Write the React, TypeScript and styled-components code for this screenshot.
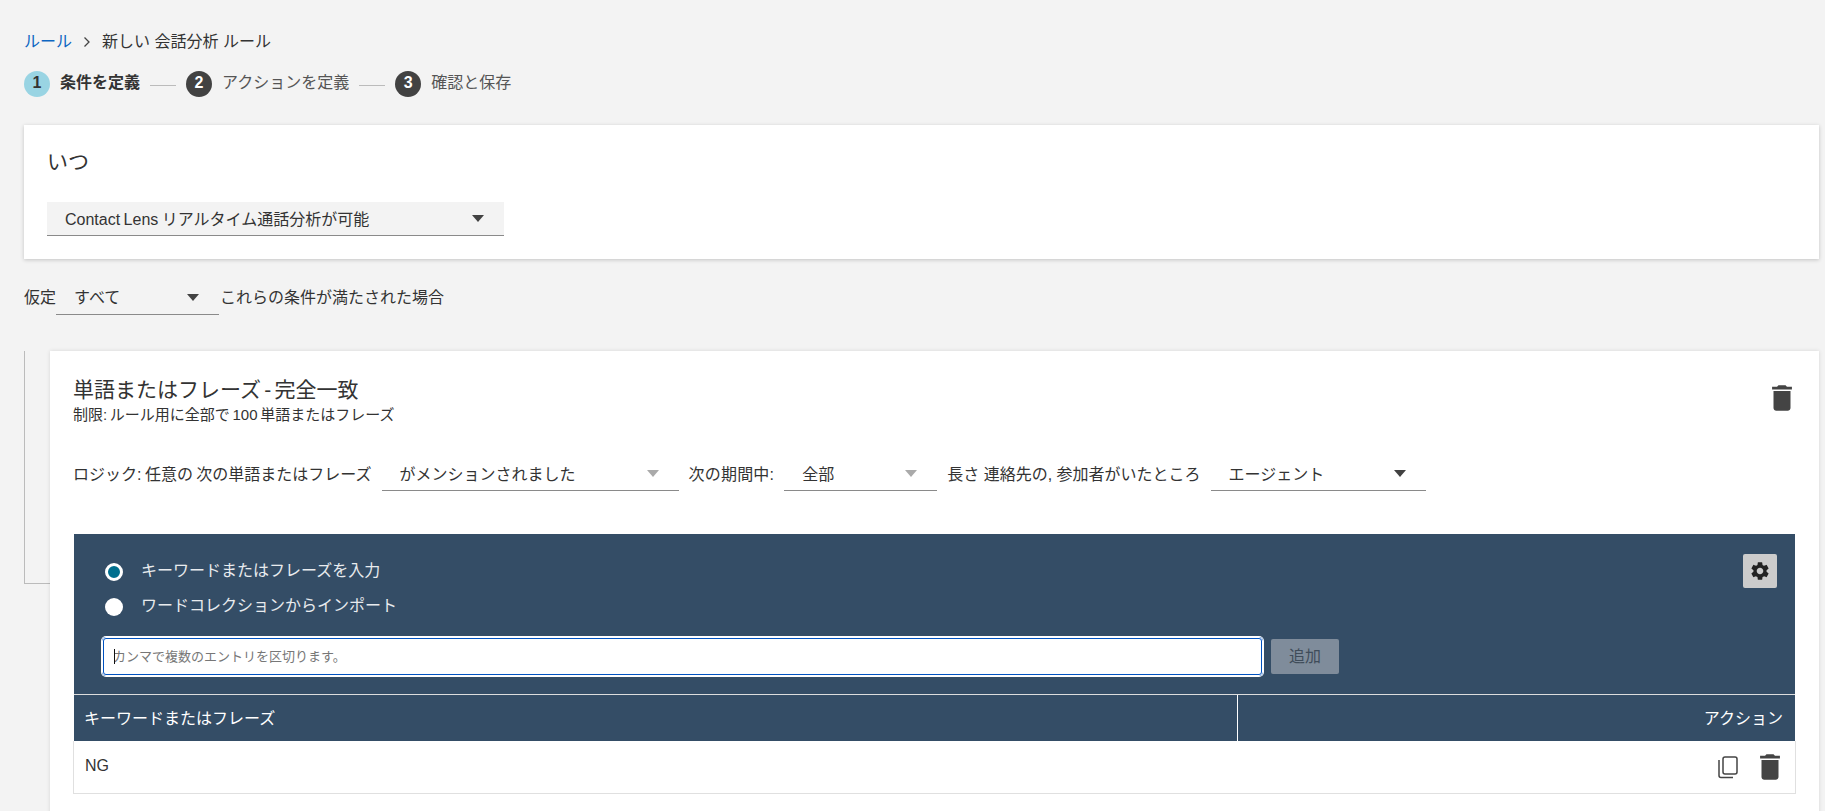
import { createGlobalStyle } from "styled-components";
import styled from "styled-components";
import { MdDelete, MdSettings } from "react-icons/md";

const GlobalStyle = createGlobalStyle`
  html, body {
    margin: 0;
    height: 100%;
    overflow: hidden;
    background: #f3f3f3;
  }

  body {
    font-family: "Liberation Sans", "Noto Sans CJK JP", sans-serif;
    font-size: 16px;
    color: #333;
  }
`;

function CopyIcon() {
  return (
    <svg width="20" height="23" viewBox="0 0 20 23" fill="none" stroke="#444" strokeWidth="1.5">
      <rect x="5" y="1" width="14" height="17" rx="2" />
      <path d="M1 4v15.5a2 2 0 0 0 2 2h12" />
    </svg>
  );
}

function App() {
  return (
    <Page>
      <GlobalStyle />
      <Breadcrumb>
        <CrumbLink>ルール</CrumbLink>
        <svg width="8" height="12" viewBox="0 0 8 12">
          <polyline points="1.5,1.5 6,6 1.5,10.5" fill="none" stroke="#444" strokeWidth="1.3" />
        </svg>
        <span>新しい 会話分析 ルール</span>
      </Breadcrumb>

      <Steps>
        <StepBadge $active>1</StepBadge>
        <StepLabel $active>条件を定義</StepLabel>
        <StepLine />
        <StepBadge>2</StepBadge>
        <StepLabel>アクションを定義</StepLabel>
        <StepLine />
        <StepBadge>3</StepBadge>
        <StepLabel>確認と保存</StepLabel>
      </Steps>

      <WhenCard>
        <WhenTitle>いつ</WhenTitle>
        <Select $filled $width={457}>
          <SelectText>Contact Lens リアルタイム通話分析が可能</SelectText>
          <Arrow />
        </Select>
      </WhenCard>

      <AssumeRow>
        <InlineText>仮定</InlineText>
        <Select $width={163}>
          <SelectText>すべて</SelectText>
          <Arrow />
        </Select>
        <AssumeTail>これらの条件が満たされた場合</AssumeTail>
      </AssumeRow>

      <ConditionGroup>
        <Bracket />
        <ConditionCard>
          <ConditionHead>
            <div>
              <ConditionTitle>単語またはフレーズ - 完全一致</ConditionTitle>
              <ConditionLimit>制限: ルール用に全部で 100 単語またはフレーズ</ConditionLimit>
            </div>
            <HeadTrash>
              <MdDelete size={34} />
            </HeadTrash>
          </ConditionHead>

          <LogicRow>
            <LogicLead>ロジック: 任意の 次の単語またはフレーズ</LogicLead>
            <Select $width={297}>
              <SelectText>がメンションされました</SelectText>
              <Arrow $muted />
            </Select>
            <PeriodText>次の期間中:</PeriodText>
            <Select $width={153}>
              <SelectText>全部</SelectText>
              <Arrow $muted />
            </Select>
            <InlineText>長さ 連絡先の, 参加者がいたところ</InlineText>
            <Select $width={215}>
              <SelectText>エージェント</SelectText>
              <Arrow />
            </Select>
          </LogicRow>

          <Panel>
            <PanelTop>
              <div>
                <RadioRow>
                  <Radio $checked />
                  <RadioText>キーワードまたはフレーズを入力</RadioText>
                </RadioRow>
                <RadioRow>
                  <Radio />
                  <RadioText>ワードコレクションからインポート</RadioText>
                </RadioRow>
              </div>
              <GearButton>
                <MdSettings size={22} />
              </GearButton>
            </PanelTop>
            <InputRow>
              <InputWrap>
                <KeywordInput placeholder="カンマで複数のエントリを区切ります。" />
                <Caret />
              </InputWrap>
              <AddButton>追加</AddButton>
            </InputRow>
          </Panel>

          <TableHead>
            <HeadCell>キーワードまたはフレーズ</HeadCell>
            <HeadCell $right>アクション</HeadCell>
          </TableHead>
          <TableRow>
            <InlineText>NG</InlineText>
            <RowActions>
              <CopyIcon />
              <MdDelete size={34} />
            </RowActions>
          </TableRow>
        </ConditionCard>
      </ConditionGroup>
    </Page>
  );
}

export default App;

const Page = styled.div`
  height: 100vh;
  padding: 32px 6px 0 24px;
  box-sizing: border-box;
  overflow: hidden;
`;

const Breadcrumb = styled.div`
  display: flex;
  align-items: center;
  gap: 11px;
  font-size: 16px;
  line-height: 20px;
`;

const CrumbLink = styled.a`
  color: #0d66c2;
`;

const Steps = styled.div`
  display: flex;
  align-items: center;
  margin-top: 19px;
  height: 26px;
`;

const StepBadge = styled.div<{ $active?: boolean }>`
  width: 26px;
  height: 26px;
  padding-bottom: 3px;
  box-sizing: border-box;
  border-radius: 50%;
  display: flex;
  align-items: center;
  justify-content: center;
  font-size: 16px;
  font-weight: 700;
  background: ${(p) => (p.$active ? "#99d4e3" : "#424242")};
  color: ${(p) => (p.$active ? "#333" : "#fff")};
`;

const StepLabel = styled.div<{ $active?: boolean }>`
  margin: 0 0 7px 10px;
  font-weight: ${(p) => (p.$active ? 700 : 400)};
  color: ${(p) => (p.$active ? "#333" : "#555")};
`;

const StepLine = styled.div`
  width: 26px;
  height: 1px;
  background: #bbb;
  margin: 2px 10px 0;
`;

const WhenCard = styled.section`
  margin-top: 28px;
  height: 134px;
  box-sizing: border-box;
  padding: 23px 23px 0;
  background: #fff;
  box-shadow: 0 1px 4px rgba(0, 0, 0, 0.2);
`;

const WhenTitle = styled.h2`
  margin: 0 0 26px;
  font-size: 21px;
  line-height: 28px;
  font-weight: 400;
`;

const Select = styled.div<{ $width: number; $filled?: boolean }>`
  display: flex;
  flex: none;
  align-items: center;
  justify-content: space-between;
  box-sizing: border-box;
  width: ${(p) => p.$width}px;
  height: 34px;
  padding: 0 20px 0 18px;
  background: ${(p) => (p.$filled ? "#f3f3f3" : "transparent")};
  border-bottom: 1px solid #8a8a8a;
`;

const SelectText = styled.span`
  margin-bottom: 2px;
  word-spacing: -1px;
`;

const InlineText = styled.span`
  margin-bottom: 3px;
`;

const LogicLead = styled(InlineText)`
  word-spacing: -1px;
`;

const PeriodText = styled(InlineText)`
  letter-spacing: 0.2px;
`;

const AssumeTail = styled(InlineText)`
  margin-left: 1px;
`;

const Arrow = styled.i<{ $muted?: boolean }>`
  width: 0;
  height: 0;
  border-left: 6.5px solid transparent;
  border-right: 6.5px solid transparent;
  border-top: 7px solid ${(p) => (p.$muted ? "#aaa" : "#424242")};
`;

const AssumeRow = styled.div`
  display: flex;
  align-items: center;
  margin-top: 22px;

  ${InlineText} {
    margin-bottom: 5px;
  }

  ${SelectText} {
    margin-bottom: 4px;
  }
`;

const ConditionGroup = styled.div`
  display: flex;
  align-items: flex-start;
  margin-top: 36px;
`;

const Bracket = styled.div`
  flex: none;
  width: 26px;
  height: 233px;
  box-sizing: border-box;
  border-left: 1px solid #bbb;
  border-bottom: 1px solid #bbb;
`;

const ConditionCard = styled.section`
  flex: 1;
  min-width: 0;
  height: 520px;
  box-sizing: border-box;
  padding: 25px 23px 0;
  background: #fff;
  box-shadow: 0 0 4px rgba(0, 0, 0, 0.12);
`;

const ConditionHead = styled.div`
  display: flex;
  justify-content: space-between;
  align-items: flex-start;
`;

const ConditionTitle = styled.h3`
  margin: 0 0 2px;
  font-size: 21px;
  line-height: 28px;
  font-weight: 400;
  word-spacing: -2.5px;
`;

const ConditionLimit = styled.div`
  font-size: 15px;
  line-height: 18px;
  word-spacing: -1.5px;
`;

const HeadTrash = styled.div`
  display: flex;
  margin: 5px -3px 0 0;
  color: #444;
`;

const LogicRow = styled.div`
  display: flex;
  align-items: center;
  gap: 10px;
  margin-top: 33px;
`;

const Panel = styled.div`
  margin: 43px 1px 0;
  padding: 20px 18px 18px 28px;
  background: #344d66;
`;

const PanelTop = styled.div`
  display: flex;
  justify-content: space-between;
  align-items: flex-start;
`;

const RadioRow = styled.label`
  display: flex;
  align-items: center;
  height: 35px;
  gap: 18px;
  padding-left: 3px;
  color: #e8ebee;
`;

const RadioText = styled.span`
  margin-bottom: 5px;
`;

const Radio = styled.span<{ $checked?: boolean }>`
  width: 18px;
  height: 18px;
  box-sizing: border-box;
  border-radius: 50%;
  background: ${(p) => (p.$checked ? "#006f8e" : "#fff")};
  border: ${(p) => (p.$checked ? "3px solid #fff" : "none")};
`;

const GearButton = styled.button`
  display: flex;
  align-items: center;
  justify-content: center;
  width: 34px;
  height: 34px;
  padding: 0;
  border: none;
  border-radius: 2px;
  background: #ccc;
  color: #222;
`;

const InputRow = styled.div`
  display: flex;
  align-items: center;
  gap: 8px;
  margin-top: 13px;
`;

const InputWrap = styled.div`
  position: relative;
  width: 1161px;
  height: 39px;
`;

const KeywordInput = styled.input`
  display: block;
  width: 100%;
  height: 100%;
  box-sizing: border-box;
  padding: 0 9px;
  border: 2px solid #0052c0;
  border-radius: 4px;
  outline: 1px solid #fff;
  outline-offset: -1px;
  box-shadow: 0 0 0 1px #fff;
  font: inherit;
  font-size: 13px;

  &::placeholder {
    color: #777;
    opacity: 1;
  }
`;

const Caret = styled.i`
  position: absolute;
  left: 12px;
  top: 12px;
  width: 1px;
  height: 15px;
  background: #111;
`;

const AddButton = styled.button`
  width: 68px;
  height: 35px;
  padding: 0 0 3px;
  border: none;
  border-radius: 2px;
  background: #7f8c9b;
  color: #3f4c5a;
  font: inherit;
`;

const TableHead = styled.div`
  display: grid;
  grid-template-columns: 1164px 1fr;
  margin: 0 1px;
  height: 47px;
  box-sizing: border-box;
  background: #344d66;
  border-top: 1px solid #ddd;
`;

const HeadCell = styled.div<{ $right?: boolean }>`
  display: flex;
  align-items: center;
  justify-content: ${(p) => (p.$right ? "flex-end" : "flex-start")};
  padding: 0 12px 2px ${(p) => (p.$right ? "12px" : "10px")};
  color: #fff;
  border-right: ${(p) => (p.$right ? "none" : "1px solid #fff")};
`;

const TableRow = styled.div`
  display: flex;
  align-items: center;
  justify-content: space-between;
  height: 53px;
  box-sizing: border-box;
  padding: 0 8px 0 11px;
  border: 1px solid #e0e0e0;
  border-top: none;
`;

const RowActions = styled.div`
  display: flex;
  align-items: center;
  gap: 15px;
  color: #444;
`;
